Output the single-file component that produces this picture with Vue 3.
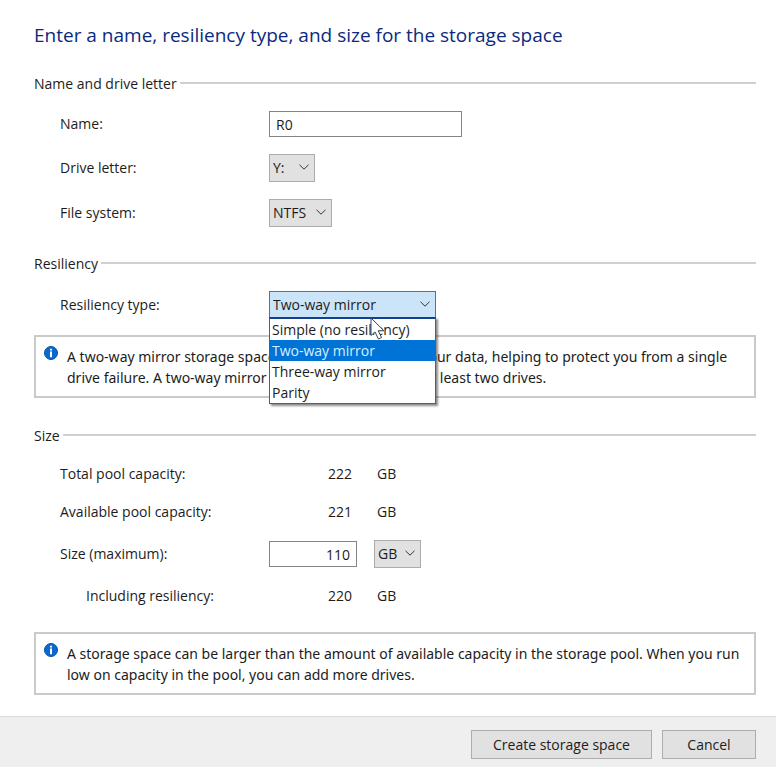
<template>
  <form class="wizard" @submit.prevent>
    <main class="content">
      <h1 class="title">Enter a name, resiliency type, and size for the storage space</h1>

      <section class="group">
        <h2 class="group-title">Name and drive letter</h2>
        <div class="rows">
          <div class="row">
            <label for="name">Name:</label>
            <input id="name" v-model="name" class="field name-field" type="text" />
          </div>
          <div class="row">
            <label for="letter">Drive letter:</label>
            <div class="combo combo-letter">
              <select id="letter" v-model="letter">
                <option v-for="l in letters" :key="l">{{ l }}</option>
              </select>
              <svg class="chevron" viewBox="0 0 10 6"><path d="M0.5 0.8 5 5.2 9.5 0.8" /></svg>
            </div>
          </div>
          <div class="row">
            <label for="fs">File system:</label>
            <div class="combo combo-fs">
              <select id="fs" v-model="fileSystem">
                <option>NTFS</option>
                <option>REFS</option>
              </select>
              <svg class="chevron" viewBox="0 0 10 6"><path d="M0.5 0.8 5 5.2 9.5 0.8" /></svg>
            </div>
          </div>
        </div>
      </section>

      <section class="group">
        <h2 class="group-title">Resiliency</h2>
        <div class="rows">
          <div class="row">
            <label for="resiliency">Resiliency type:</label>
            <div class="combo combo-resiliency" :class="{ open }">
              <select id="resiliency" v-model="resiliency" @mousedown.prevent="open = !open">
                <option v-for="t in types" :key="t">{{ t }}</option>
              </select>
              <svg class="chevron" viewBox="0 0 10 6"><path d="M0.5 0.8 5 5.2 9.5 0.8" /></svg>
              <ul v-if="open" class="menu" role="listbox" aria-label="Resiliency type">
                <li
                  v-for="t in types"
                  :key="t"
                  role="option"
                  :aria-selected="t === resiliency"
                  :class="{ selected: t === resiliency }"
                  @click="pick(t)"
                >{{ t }}</li>
              </ul>
              <svg v-if="open" class="cursor" viewBox="0 0 15 23">
                <path d="M1 1v17.5l4-3.6 3.4 7.1 3.2-1.4-3.4-6.8H14z" />
              </svg>
            </div>
          </div>
        </div>
        <div class="info">
          <svg class="info-icon" viewBox="0 0 14 14">
            <circle cx="7" cy="7" r="6.5" />
            <path d="M6 2.8h2v1.8H6zM6 5.6h2v5.6H6z" />
          </svg>
          <p>A two-way mirror storage space creates two copies of your data, helping to protect you from a single drive failure. A two-way mirror storage space requires at least two drives.</p>
        </div>
      </section>

      <section class="group">
        <h2 class="group-title">Size</h2>
        <div class="rows size-rows">
          <div class="row">
            <span>Total pool capacity:</span>
            <div class="amount"><span class="number">222</span><span class="unit">GB</span></div>
          </div>
          <div class="row">
            <span>Available pool capacity:</span>
            <div class="amount"><span class="number">221</span><span class="unit">GB</span></div>
          </div>
          <div class="row">
            <label for="size">Size (maximum):</label>
            <div class="amount">
              <input id="size" v-model="size" class="field size-field" type="text" />
              <div class="combo combo-unit">
                <select v-model="unit" aria-label="Size unit">
                  <option>MB</option>
                  <option>GB</option>
                  <option>TB</option>
                </select>
                <svg class="chevron" viewBox="0 0 10 6"><path d="M0.5 0.8 5 5.2 9.5 0.8" /></svg>
              </div>
            </div>
          </div>
          <div class="row">
            <span class="nested">Including resiliency:</span>
            <div class="amount"><span class="number">{{ total }}</span><span class="unit">GB</span></div>
          </div>
        </div>
        <div class="info info-size">
          <svg class="info-icon" viewBox="0 0 14 14">
            <circle cx="7" cy="7" r="6.5" />
            <path d="M6 2.8h2v1.8H6zM6 5.6h2v5.6H6z" />
          </svg>
          <p>A storage space can be larger than the amount of available capacity in the storage pool. When you run low on capacity in the pool, you can add more drives.</p>
        </div>
      </section>
    </main>

    <footer class="footer">
      <button type="submit" class="btn btn-create">Create storage space</button>
      <button type="button" class="btn">Cancel</button>
    </footer>
  </form>
</template>

<script setup>
import { ref, computed } from 'vue'

const letters = ['X:', 'Y:', 'Z:']
const types = ['Simple (no resiliency)', 'Two-way mirror', 'Three-way mirror', 'Parity']
const copies = [1, 2, 3, 1]

const name = ref('R0')
const letter = ref('Y:')
const fileSystem = ref('NTFS')
const resiliency = ref('Two-way mirror')
const size = ref('110')
const unit = ref('GB')
const open = ref(true)

const total = computed(() => (Number(size.value) || 0) * copies[types.indexOf(resiliency.value)])

function pick(type) {
  resiliency.value = type
  open.value = false
}
</script>

<style>
body {
  margin: 0;
  background: #fff;
}
</style>

<style scoped>
.wizard {
  display: flex;
  flex-direction: column;
  min-height: 100vh;
  font: 14px/20px "Open Sans", "Noto Sans", sans-serif;
  color: #1c1c1c;
}

.wizard *,
.wizard *::after {
  box-sizing: border-box;
}

.content {
  flex: 1;
  padding: 21px 20px 21px 34px;
}

.title {
  margin: 0 0 25px;
  font-size: 19px;
  line-height: 28px;
  font-weight: 400;
  color: #0a2a80;
}

.group + .group {
  margin-top: 27px;
}

.group-title {
  display: flex;
  gap: 3px;
  margin: 0;
  font-size: 14px;
  font-weight: 400;
}

.group-title::after {
  content: "";
  flex: 1;
  height: 10px;
  border-bottom: 2px solid #d0d0d0;
}

.rows {
  display: grid;
  gap: 17px;
  padding: 17px 0 0 26px;
}

.size-rows {
  gap: 18px;
  padding-top: 18px;
}

.row {
  display: grid;
  grid-template-columns: 209px 1fr;
  align-items: center;
}

.nested {
  padding-left: 26px;
}

.field,
select,
.btn {
  font: inherit;
  color: inherit;
  border-radius: 0;
  outline: none;
}

.field {
  height: 26px;
  padding: 0 6px;
  border: 1px solid #858585;
  background: #fff;
}

.name-field {
  width: 193px;
}

.amount {
  display: grid;
  grid-template-columns: 88px auto;
  justify-content: start;
  align-items: center;
  column-gap: 17px;
}

.size-field {
  width: 88px;
  text-align: right;
}

.number {
  padding-right: 5px;
  text-align: right;
}

.unit {
  padding-left: 3px;
}

.combo {
  position: relative;
  height: 28px;
}

.combo select {
  appearance: none;
  display: block;
  width: 100%;
  height: 28px;
  padding: 0 3px;
  border: 1px solid #acacac;
  background: #e1e1e1;
}

.combo-letter {
  width: 46px;
}

.combo-fs {
  width: 63px;
}

.combo-unit {
  width: 47px;
}

.combo-resiliency {
  width: 167px;
}

.combo-resiliency.open select {
  border-color: #3b78b4;
  background: #cce4f7;
}

.chevron {
  position: absolute;
  top: 10px;
  right: 6px;
  width: 10px;
  height: 6px;
  fill: none;
  stroke: #333;
  pointer-events: none;
}

.menu {
  position: absolute;
  z-index: 1;
  top: 26px;
  left: 0;
  right: 0;
  margin: 0;
  padding: 0;
  list-style: none;
  border: 1px solid #1f6cb5;
  border-top: 2px solid #12418f;
  background: #fff;
  box-shadow: 2px 2px 2px rgba(0, 0, 0, 0.45);
}

.menu li {
  padding: 0 2px;
  line-height: 21px;
}

.menu li.selected {
  color: #d5f0ff;
  background: #0073d6;
}

.cursor {
  position: absolute;
  z-index: 2;
  top: 26px;
  left: 101px;
  width: 15px;
  height: 23px;
  fill: #fff;
  stroke: #444;
  pointer-events: none;
}

.info {
  display: flex;
  gap: 9px;
  margin-top: 16px;
  padding: 9px 8px 8px;
  border: 2px solid #cacaca;
}

.group:last-child {
  margin-top: 28px;
}

.info-size {
  margin-top: 26px;
}

.info p {
  margin: 0;
  font-family: "Noto Sans", "Open Sans", sans-serif;
  line-height: 21px;
}

.info-icon {
  flex: none;
  width: 14px;
  height: 14px;
}

.info-icon circle {
  fill: #0a69cb;
  stroke: #0653a5;
}

.info-icon path {
  fill: #fff;
}

.footer {
  display: flex;
  justify-content: flex-end;
  gap: 10px;
  padding: 13px 20px 8px;
  border-top: 1px solid #d9d9d9;
  background: #efefef;
}

.btn {
  min-width: 94px;
  height: 29px;
  padding: 0 20px;
  border: 1px solid #adadad;
  background: #e1e1e1;
}

.btn-create {
  min-width: 181px;
}
</style>
